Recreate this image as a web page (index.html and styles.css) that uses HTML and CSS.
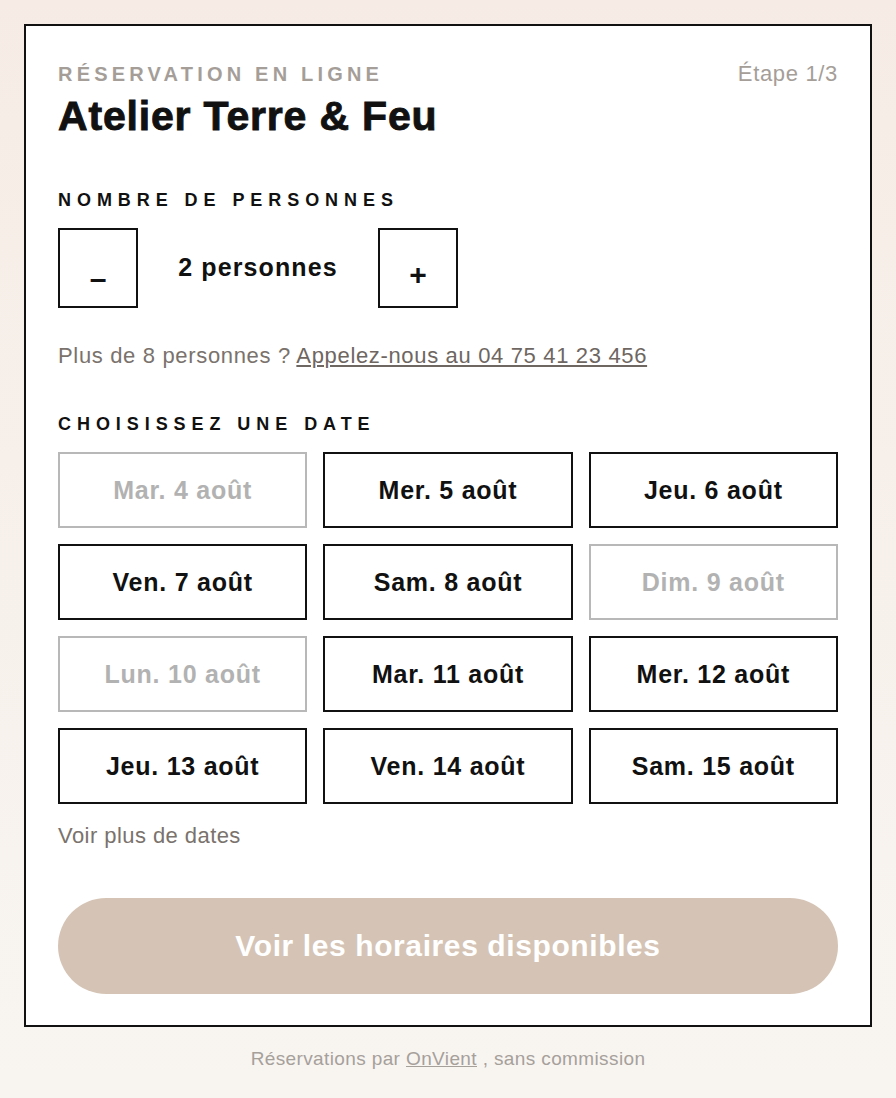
FILE: index.html
```html
<!DOCTYPE html>
<html lang="fr">
<head>
    <meta charset="UTF-8">
    <meta name="viewport" content="width=device-width, initial-scale=1.0">
    <title>Réservation - Atelier Terre &amp; Feu</title>
    <link rel="stylesheet" href="styles.css">
</head>
<body>
    <div class="card">
        <header class="card-head">
            <div>
                <p class="eyebrow">Réservation en ligne</p>
                <h1>Atelier Terre &amp; Feu</h1>
            </div>
            <span class="step">Étape 1/3</span>
        </header>

        <section class="guests">
            <h2 class="label">Nombre de personnes</h2>
            <div class="stepper">
                <button class="step-btn minus">&ndash;</button>
                <span class="count">2 personnes</span>
                <button class="step-btn plus">+</button>
            </div>
            <p class="note">Plus de 8 personnes ? <a href="#">Appelez-nous au 04 75 41 23 456</a></p>
        </section>

        <section class="dates">
            <h2 class="label">Choisissez une date</h2>
            <div class="date-grid">
                <button class="date disabled">Mar. 4 août</button>
                <button class="date">Mer. 5 août</button>
                <button class="date">Jeu. 6 août</button>
                <button class="date">Ven. 7 août</button>
                <button class="date">Sam. 8 août</button>
                <button class="date disabled">Dim. 9 août</button>
                <button class="date disabled">Lun. 10 août</button>
                <button class="date">Mar. 11 août</button>
                <button class="date">Mer. 12 août</button>
                <button class="date">Jeu. 13 août</button>
                <button class="date">Ven. 14 août</button>
                <button class="date">Sam. 15 août</button>
            </div>
            <a href="#" class="more">Voir plus de dates</a>
        </section>

        <button class="submit">Voir les horaires disponibles</button>
    </div>

    <footer>
        <p>Réservations par <a href="#">OnVient</a> , sans commission</p>
    </footer>
</body>
</html>
```

FILE: styles.css
```css
body {
    font-family: 'Liberation Sans', Arial, sans-serif;
    margin: 0;
    padding: 24px 24px 0;
    color: #111;
    background: linear-gradient(to bottom, #f6ece5, #f8f5f1);
    min-height: 1098px;
    box-sizing: border-box;
}
.card {
    background-color: #fff;
    border: 2px solid #111;
    padding: 36px 32px 31px;
}
.card-head {
    display: flex;
    justify-content: space-between;
    align-items: flex-start;
}
.eyebrow {
    margin: 0;
    font-size: 20px;
    line-height: 24px;
    font-weight: bold;
    letter-spacing: 0.21em;
    text-transform: uppercase;
    color: #a59e98;
}
h1 {
    margin: 8px 0 0;
    font-size: 41px;
    line-height: 44px;
    font-weight: bold;
    letter-spacing: 0.02em;
    -webkit-text-stroke: 0.9px #111; /* heavier, like a black weight */
}
.step {
    font-size: 22px;
    line-height: 24px;
    letter-spacing: 0.03em;
    color: #a59e98;
}
.label {
    margin: 0;
    font-size: 18px;
    line-height: 24px;
    font-weight: bold;
    letter-spacing: 0.33em;
    text-transform: uppercase;
}
.guests {
    margin-top: 50px;
}
.stepper {
    display: flex;
    align-items: center;
    margin-top: 16px;
}
.step-btn {
    width: 80px;
    height: 80px;
    border: 2px solid #111;
    background: #fff;
    color: #111;
    font-family: inherit;
    font-size: 30px;
    font-weight: bold;
    padding: 18px 0 0;
    cursor: pointer;
}
.step-btn.minus {
    padding-top: 22px;
}
.step-btn.plus {
    padding-top: 14px;
}
.count {
    width: 240px;
    text-align: center;
    font-size: 25px;
    font-weight: bold;
    letter-spacing: 0.045em;
    padding-bottom: 2px;
}
.note {
    margin: 36px 0 0;
    font-size: 22px;
    line-height: 24px;
    color: #7a726c;
    letter-spacing: 0.03em;
}
.note a {
    color: #6e6661;
}
.dates {
    margin-top: 44px;
}
.date-grid {
    display: grid;
    grid-template-columns: repeat(3, 1fr);
    gap: 16px;
    margin-top: 16px;
}
.date {
    height: 76px;
    border: 2px solid #111;
    background: #fff;
    color: #111;
    font-family: inherit;
    font-size: 25px;
    font-weight: bold;
    letter-spacing: 0.03em;
    cursor: pointer;
}
.date.disabled {
    border-color: #b8b8b8;
    color: #b2b2b2;
}
.more {
    display: block;
    margin-top: 20px;
    font-size: 22px;
    line-height: 24px;
    color: #7a726c;
    text-decoration: none;
    letter-spacing: 0.02em;
}
.submit {
    display: block;
    width: 100%;
    height: 96px;
    margin-top: 50px;
    border: none;
    border-radius: 48px;
    background-color: #d5c4b5;
    color: #fff;
    font-family: inherit;
    font-size: 30px;
    font-weight: bold;
    letter-spacing: 0.02em;
}
footer {
    text-align: center;
}
footer p {
    margin: 20px 0;
    font-size: 19px;
    line-height: 24px;
    letter-spacing: 0.02em;
    color: #a6a09b;
}
footer a {
    color: #a6a09b;
}
```
